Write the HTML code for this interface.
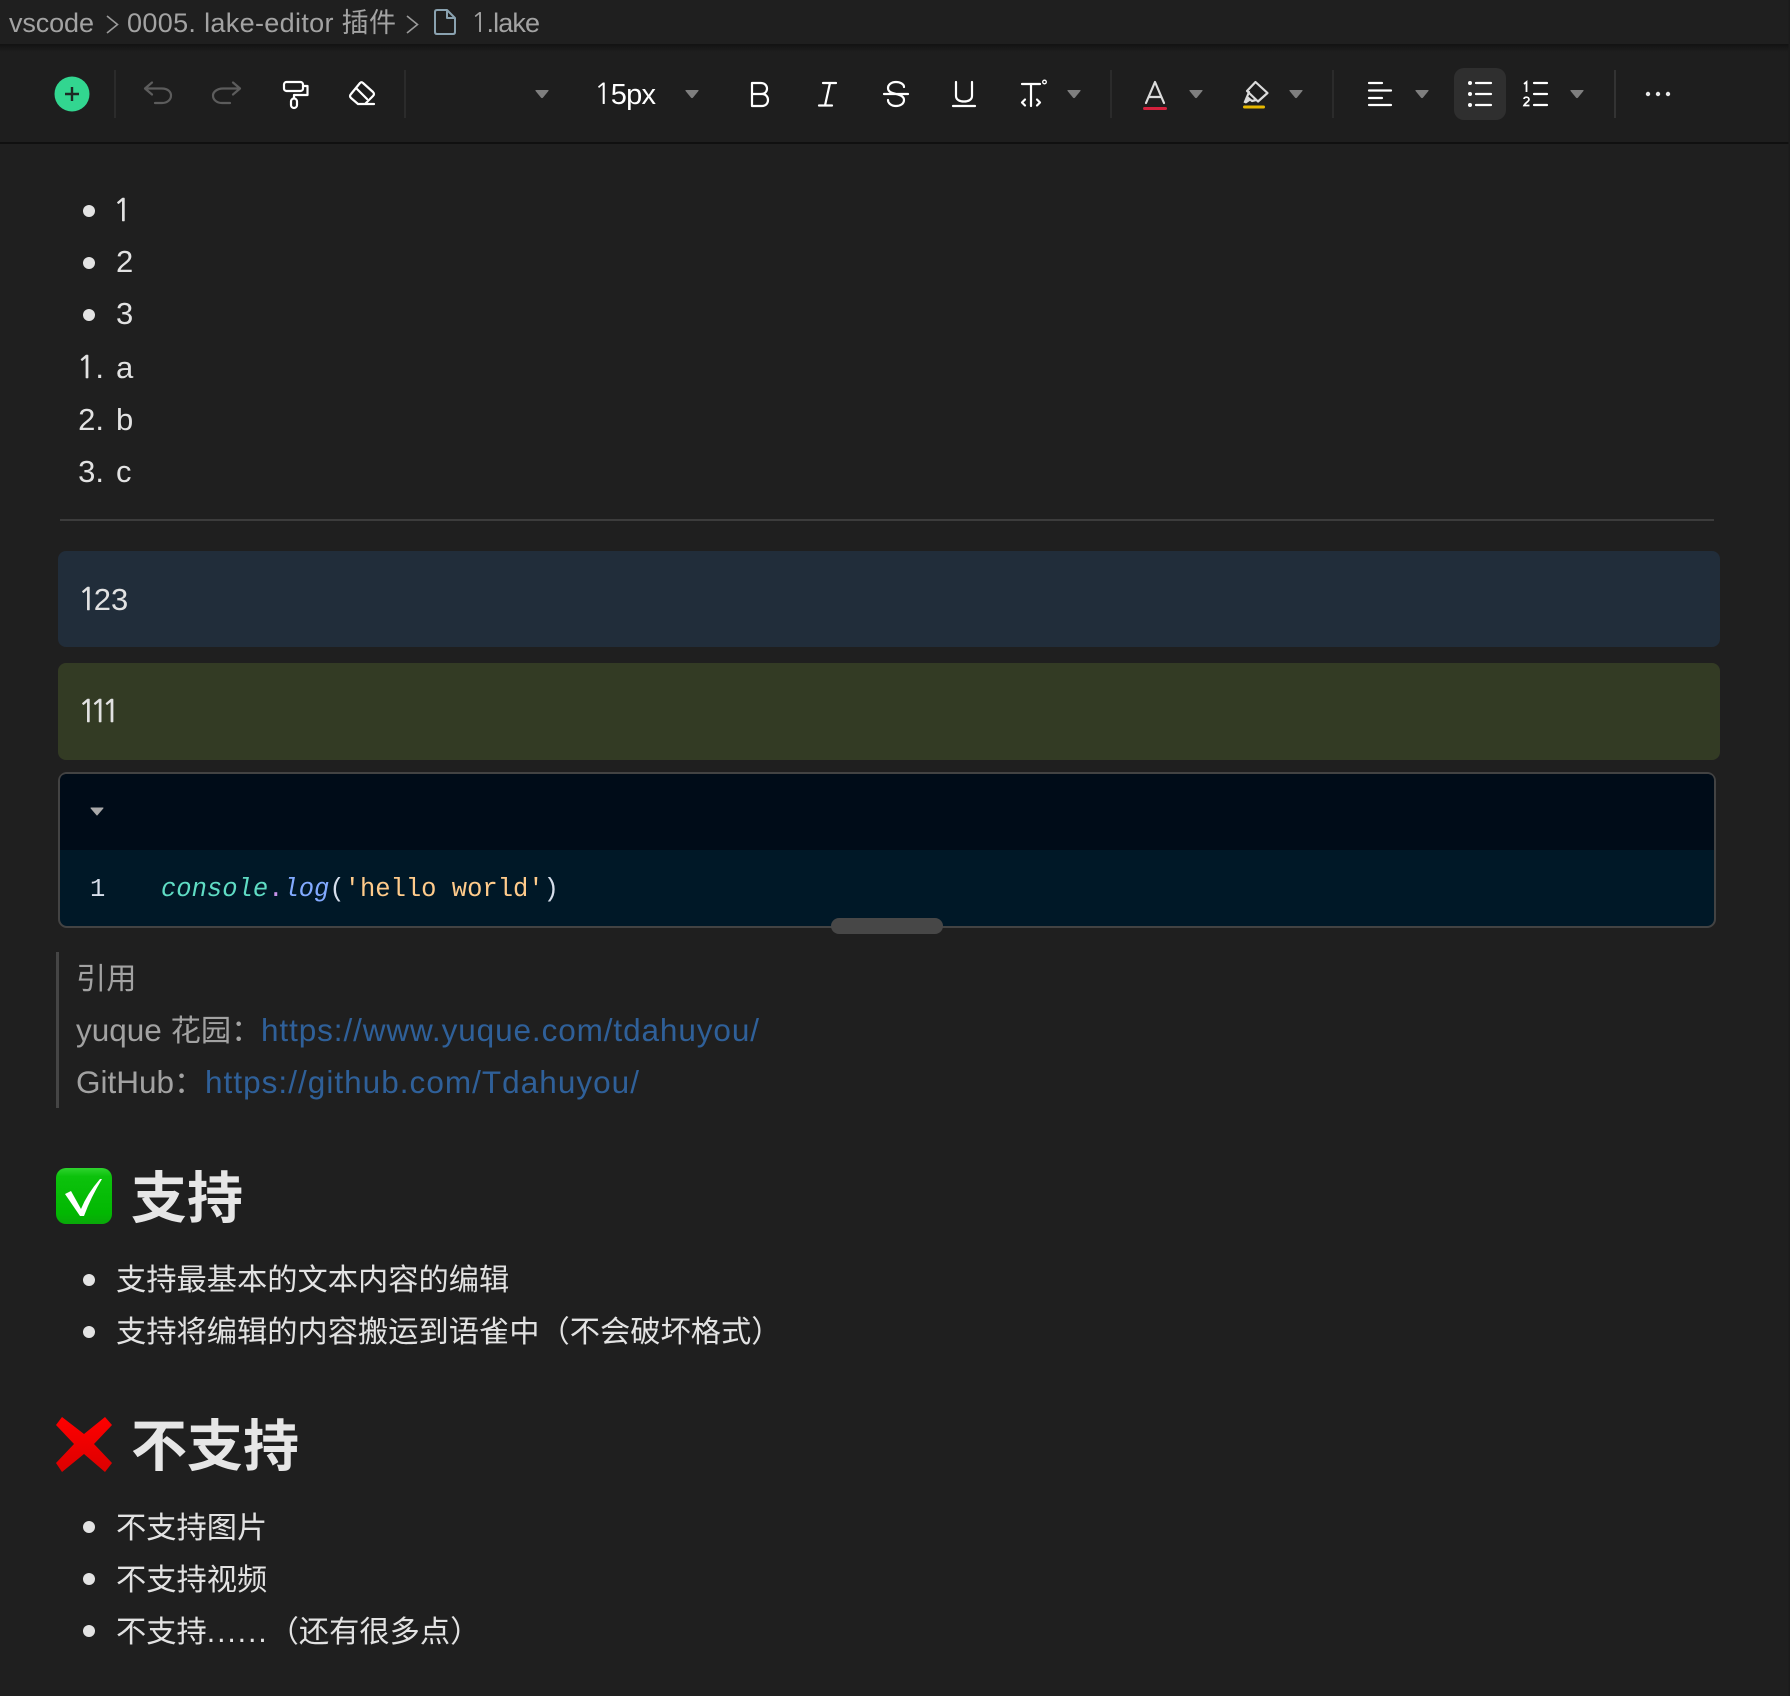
<!DOCTYPE html>
<html lang="zh"><head><meta charset="utf-8"><title>1.lake</title>
<style>
html,body{margin:0;padding:0;background:#1f1f1f;width:1790px;height:1696px;overflow:hidden}
svg{display:block}
text{font-family:"Liberation Sans","Noto Sans CJK SC",sans-serif}
.n{font-family:"NanumGothic","Liberation Sans",sans-serif}
.nt{font-family:"NanumGothic","Liberation Sans",sans-serif;stroke:#e2e2e2;stroke-width:.5px}
.b{fill:#a3a3a3;font-size:27px}
.t{fill:#e2e2e2;font-size:30.25px}
.u{fill:#e2e2e2;font-size:31px}
.q{fill:#a2a2a2;font-size:30.25px}
.l{fill:#2f6099;font-size:31.5px}
.h{fill:#e6e6e6;font-size:56px;font-weight:700}
.c{font-family:"Liberation Mono","DejaVu Sans Mono",monospace;font-size:25.5px}
.i{fill:none;stroke:#fff;stroke-width:2.2;stroke-linecap:round;stroke-linejoin:round}
.d{fill:none;stroke:#5c5c5c;stroke-width:2.2;stroke-linecap:round;stroke-linejoin:round}
.g{fill:none;stroke:#dcdcdc;stroke-width:2.2;stroke-linecap:round;stroke-linejoin:round}
</style></head><body>
<svg width="1790" height="1696" viewBox="0 0 1790 1696" xmlns="http://www.w3.org/2000/svg">
<defs>
<linearGradient id="sh" x1="0" y1="0" x2="0" y2="1"><stop offset="0" stop-color="#121212"/><stop offset="1" stop-color="#1e1e1e"/></linearGradient>
<linearGradient id="gr" x1="0" y1="0" x2="0" y2="1"><stop offset="0" stop-color="#2fd32f"/><stop offset=".15" stop-color="#0cc20c"/><stop offset=".8" stop-color="#02b802"/><stop offset="1" stop-color="#09a809"/></linearGradient>
<linearGradient id="rd" x1="0" y1="0" x2="0" y2="1"><stop offset="0" stop-color="#ff0000"/><stop offset="1" stop-color="#dc0000"/></linearGradient>
<path id="car" d="M-6,-4 H6 Q7,-4 6.4,-3 L1,3.6 Q0,4.6 -1,3.6 L-6.4,-3 Q-7,-4 -6,-4Z" fill="#7f7f7f"/>
</defs>
<rect width="1790" height="1696" fill="#1f1f1f"/>
<!-- top bar -->
<rect width="1790" height="44" fill="#1f1f1f"/>
<rect y="44" width="1790" height="8" fill="url(#sh)"/>
<rect y="52" width="1790" height="90" fill="#1e1e1e"/>
<rect y="142" width="1790" height="2" fill="#101010"/>
<text class="b" x="9" y="32" textLength="85">vscode</text>
<path d="M107,16 L117.5,24.5 L107,33" fill="none" stroke="#9a9a9a" stroke-width="1.6"/>
<text class="b" x="127" y="32" textLength="269">0005. lake-editor 插件</text>
<path d="M407,16 L417.5,24.5 L407,33" fill="none" stroke="#9a9a9a" stroke-width="1.6"/>
<path d="M435,12 Q435,10 437,10 H447 L455,18 V32 Q455,34 453,34 H437 Q435,34 435,32Z M447,10 V18 H455" fill="none" stroke="#8aa2b0" stroke-width="2" stroke-linejoin="round"/>
<text class="b" x="471" y="32" textLength="69"><tspan class="n">1</tspan>.lake</text>
<!-- toolbar -->
<circle cx="72" cy="94" r="17.5" fill="#32d690"/>
<path d="M72,87 V101 M65,94 H79" stroke="#1c2a24" stroke-width="2.4" fill="none"/>
<rect x="114" y="70" width="2" height="48" fill="#2b2b2b"/>
<path class="d" d="M152,82.5 L145,88.5 L152,94.5 M145,88.5 H162 C168,88.5 171,92 171,95.5 C171,100 167,103 162,103 H155"/>
<path class="d" d="M233,82.5 L240,88.5 L233,94.5 M240,88.5 H223 C217,88.5 213,92 213,95.5 C213,100 217,103 222,103 H230"/>
<rect class="i" x="284" y="82" width="19" height="9" rx="2.5"/>
<path class="i" d="M303,86 H307.5 V95 H294 V98"/>
<rect class="i" x="291" y="98.5" width="6" height="9.5" rx="3"/>
<path class="i" d="M363,83 L373,92 Q375,94 373,96 L365,104 H358 L351,98 Q349,96 351,94 L360,83 Q361.5,81.5 363,83Z M356.500,88.500 L367,99 M358,104 H374"/>
<rect x="404" y="70" width="2" height="48" fill="#2b2b2b"/>
<use href="#car" x="542" y="94"/>
<text x="594" y="104" fill="#fff" font-size="29" textLength="62"><tspan class="n">1</tspan>5px</text>
<use href="#car" x="692" y="94"/>
<path class="i" d="M752,83 H761 C765,83 767,86 767,88.500 C767,91.500 765,94 761,94 H752Z M752,94 H762 C766,94 768,97 768,100 C768,103 766,106 762,106 H752Z"/>
<path class="i" d="M823,83 H836 M819,105.500 H832 M830,83 L825,105.500"/>
<path class="i" d="M904,87 C904,84 900,82 896,82 C891,82 888,85 888,88 C888,92 892,93 896,94 C901,95 904,97 904,100 C904,104 900,106 896,106 C891,106 888,103 888,100 M884,94 H908" stroke-width="2"/>
<path class="i" d="M956,82 V96 C956,100 960,101.500 964,101.500 C968,101.500 972,100 972,96 V82"/>
<path class="i" d="M953,106 H975"/>
<path class="i" d="M1022,84 H1040 M1031,84 V106 M1025,99.500 L1022,102.500 L1025,105.500 M1037,99.500 L1040,102.500 L1037,105.500"/>
<circle cx="1044.500" cy="82" r="1.800" fill="none" stroke="#fff" stroke-width="1.300"/>
<use href="#car" x="1074" y="94"/>
<rect x="1110" y="70" width="2" height="48" fill="#2b2b2b"/>
<path class="g" d="M1146,103 L1155,82 L1164,103 M1149,97 H1161"/>
<rect x="1143" y="107" width="24" height="3" rx="1.500" fill="#d4213d"/>
<use href="#car" x="1196" y="94"/>
<path class="g" d="M1255.500,82 L1267.500,93 L1258,101.500 L1247,91Z M1249,92 L1247,97 L1252,101 L1256,100" stroke-width="2"/>
<path d="M1246,96.500 L1250.500,100.500 L1246,103.500 L1243.500,102.500Z" fill="#dcdcdc"/>
<rect x="1243" y="105.500" width="22" height="3" rx="1.500" fill="#e6b800"/>
<use href="#car" x="1296" y="94"/>
<rect x="1332" y="70" width="2" height="48" fill="#2b2b2b"/>
<path class="i" d="M1369,83 H1382 M1369,90.500 H1391 M1369,98 H1382 M1369,105 H1391"/>
<use href="#car" x="1422" y="94"/>
<rect x="1454" y="68" width="52" height="52" rx="10" fill="#2f2f2f"/>
<path class="i" d="M1476,83 H1491 M1476,94 H1491 M1476,105 H1491"/>
<circle cx="1470" cy="83" r="2" fill="#fff"/><circle cx="1470" cy="94" r="2" fill="#fff"/><circle cx="1470" cy="105" r="2" fill="#fff"/>
<path class="i" d="M1534,83 H1547 M1534,94 H1547 M1534,105 H1547"/>
<path d="M1524,84 L1526.500,82 V92" fill="none" stroke="#fff" stroke-width="1.800"/>
<path d="M1524,99 C1524,96.500 1529,96.500 1529,99.500 C1529,101.500 1525,103 1524,105.500 H1529.500" fill="none" stroke="#fff" stroke-width="1.700"/>
<use href="#car" x="1577" y="94"/>
<rect x="1614" y="70" width="2" height="48" fill="#333"/>
<circle cx="1648" cy="94" r="2.200" fill="#e8e8e8"/><circle cx="1658" cy="94" r="2.200" fill="#e8e8e8"/><circle cx="1668" cy="94" r="2.200" fill="#e8e8e8"/>
<!-- lists -->
<circle cx="89" cy="211" r="6" fill="#e3e3e3"/><circle cx="89" cy="263" r="6" fill="#e3e3e3"/><circle cx="89" cy="315" r="6" fill="#e3e3e3"/>
<text class="u" x="113" y="221"><tspan class="nt">1</tspan></text>
<text class="u" x="116" y="272">2</text>
<text class="u" x="116" y="324">3</text>
<text class="u" x="104" y="378" text-anchor="end"><tspan class="nt">1</tspan>.</text>
<text class="u" x="104" y="430" text-anchor="end">2.</text>
<text class="u" x="104" y="482" text-anchor="end">3.</text>
<text class="u" x="116" y="378">a</text>
<text class="u" x="116" y="430">b</text>
<text class="u" x="116" y="482">c</text>
<rect x="60" y="519" width="1654" height="2" fill="#3c3c3c"/>
<!-- alerts -->
<rect x="58" y="551" width="1662" height="96" rx="8" fill="#212d3a"/>
<text class="u" x="78" y="610"><tspan class="nt" letter-spacing="-3">1</tspan>23</text>
<rect x="58" y="663" width="1662" height="97" rx="8" fill="#333b24"/>
<text class="u" x="78" y="722" letter-spacing="-7"><tspan class="nt">111</tspan></text>
<!-- code -->
<rect x="59" y="773" width="1656" height="154" rx="8" fill="#001827" stroke="#434343" stroke-width="2"/>
<path d="M60,850 V781 Q60,774 67,774 H1707 Q1714,774 1714,781 V850Z" fill="#000c18"/>
<path d="M91,808 H103 L97,815Z" fill="#a9a9a9" stroke="#a9a9a9" stroke-width="1" stroke-linejoin="round"/>
<text class="c" x="90" y="896" fill="#d6deeb">1</text>
<text class="c" x="161" y="896" xml:space="preserve"><tspan fill="#5fdcc4" font-style="italic">console</tspan><tspan fill="#c792ea">.</tspan><tspan fill="#82aaff" font-style="italic">log</tspan><tspan fill="#d6deeb">(</tspan><tspan fill="#ffcb8b">'hello world'</tspan><tspan fill="#d6deeb">)</tspan></text>
<rect x="831" y="918" width="112" height="16" rx="8" fill="#474747"/>
<!-- quote -->
<rect x="56" y="952" width="3" height="156" fill="#454545"/>
<text class="q" x="76" y="989">引用</text>
<text class="q" x="76" y="1041"><tspan font-size="31.5">yuque </tspan>花园：</text>
<text class="l" x="261" y="1041" textLength="498">https://www.yuque.com/tdahuyou/</text>
<text class="q" x="76" y="1093"><tspan font-size="31.5">GitHub</tspan>：</text>
<text class="l" x="205" y="1093" textLength="434">https://github.com/Tdahuyou/</text>
<!-- heading 1 -->
<rect x="56" y="1168" width="56" height="56" rx="10" fill="url(#gr)"/>
<path d="M65,1194 L71,1191 L81,1209 Q87,1194 100,1179 L102,1179 Q91,1197 84,1216 H80Z" fill="#fff"/>
<text class="h" x="131" y="1218">支持</text>
<circle cx="89" cy="1280" r="6" fill="#e3e3e3"/><circle cx="89" cy="1332" r="6" fill="#e3e3e3"/>
<text class="t" x="116" y="1290">支持最基本的文本内容的编辑</text>
<text class="t" x="116" y="1342">支持将编辑的内容搬运到语雀中（不会破坏格式）</text>
<!-- heading 2 -->
<path d="M56,1425 L62,1417 L84,1434 L105,1417 L112,1425 L94,1444 L112,1463 L105,1472 L84,1454 L62,1472 L56,1463 L74,1444Z" fill="url(#rd)"/>
<text class="h" x="131" y="1466">不支持</text>
<circle cx="89" cy="1527" r="6" fill="#e3e3e3"/><circle cx="89" cy="1579" r="6" fill="#e3e3e3"/><circle cx="89" cy="1631" r="6" fill="#e3e3e3"/>
<text class="t" x="116" y="1538">不支持图片</text>
<text class="t" x="116" y="1590">不支持视频</text>
<text class="t" x="116" y="1642">不支持<tspan letter-spacing="1.9">......</tspan>（还有很多点）</text>
<rect x="1788.500" y="0" width="1.500" height="1696" fill="#1b1b1b"/>
</svg>
</body></html>
